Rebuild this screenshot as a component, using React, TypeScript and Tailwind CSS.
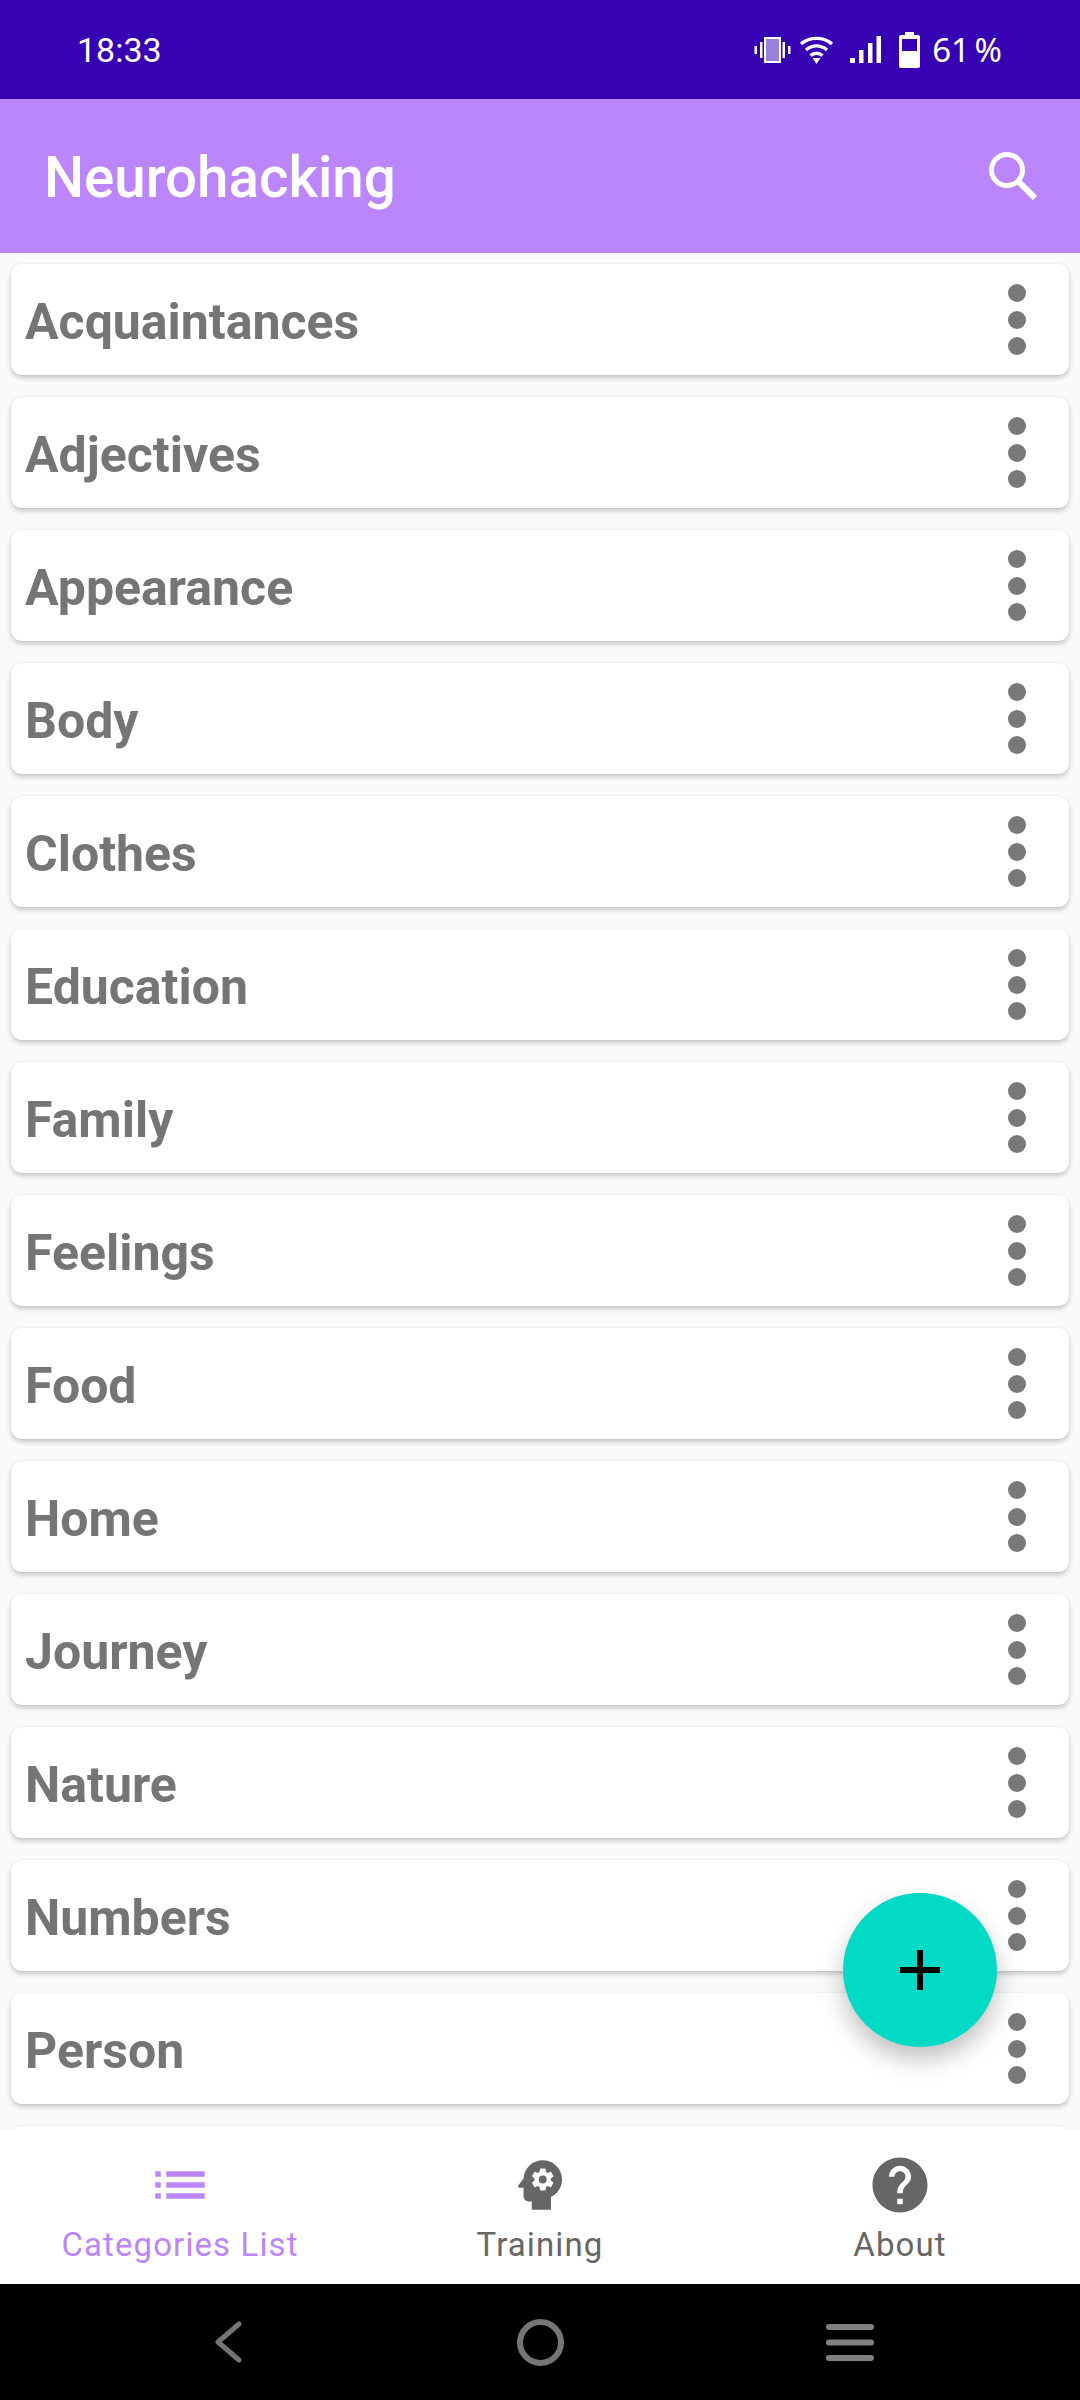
import type { ReactNode } from "react";
import { MdHelp, MdList, MdPsychology } from "react-icons/md";

const categories = [
  "Acquaintances", "Adjectives", "Appearance", "Body", "Clothes", "Education", "Family",
  "Feelings", "Food", "Home", "Journey", "Nature", "Numbers", "Person", "",
];

function Card({ name }: { name: string }) {
  return (
    <div className="flex h-[111px] shrink-0 items-center justify-between rounded-[11px] bg-white pl-[14px] pr-[43px] shadow-[0_3px_5px_rgba(0,0,0,0.2),0_0_2px_rgba(0,0,0,0.08)]">
      <span className="pt-[5px] text-[50px] font-bold leading-none text-[#757575]">{name}</span>
      <span className="flex flex-col gap-[8.6px]">
        <span className="size-[18px] rounded-full bg-[#787878]" />
        <span className="size-[18px] rounded-full bg-[#787878]" />
        <span className="size-[18px] rounded-full bg-[#787878]" />
      </span>
    </div>
  );
}

function StatusIcons() {
  return (
    <div className="flex items-center text-white">
      <svg width="37" height="26" viewBox="0 0 37 26" className="mr-[9px]">
        <rect x="11" y="1" width="15" height="24" fill="#9a7fdc" stroke="white" strokeWidth="2" />
        <rect x="6" y="5" width="2.5" height="16" fill="white" />
        <rect x="28.5" y="5" width="2.5" height="16" fill="white" />
        <rect x="0.5" y="9" width="2.5" height="8" fill="white" />
        <rect x="34" y="9" width="2.5" height="8" fill="white" />
      </svg>
      <svg width="33" height="28" viewBox="0 0 33 28" className="mr-[17px]" fill="none" stroke="white" strokeWidth="3.4">
        <path d="M1 8C9.5 .5 23.5 .5 32 8" />
        <path d="M6 14C12 8.5 21 8.5 27 14" />
        <path d="M10.5 19.5C14 16.5 19 16.5 22.5 19.5" />
        <path d="M12.5 22H20.5L16.5 28Z" fill="white" stroke="none" />
      </svg>
      <svg width="31" height="27" viewBox="0 0 31 27" className="mr-[18px]" fill="white">
        <rect x="0" y="22" width="5" height="5" />
        <rect x="9" y="14" width="4.5" height="13" />
        <rect x="18" y="7" width="4.5" height="20" />
        <rect x="26.5" y="0" width="4.5" height="27" />
      </svg>
      <svg width="21" height="36" viewBox="0 0 21 36" className="mr-[12px]">
        <path d="M6 0H15V3H19Q21 3 21 5V34Q21 36 19 36H2Q0 36 0 34V5Q0 3 2 3H6Z" fill="white" />
        <rect x="3" y="7" width="15" height="12" fill="#3700b3" />
      </svg>
      <span className="font-['Noto_Sans',sans-serif] text-[33px] leading-none [word-spacing:-4px]">61 %</span>
    </div>
  );
}

function NavItem({ label, active, children }: { label: string; active?: boolean; children: ReactNode }) {
  return (
    <div className={`flex flex-1 flex-col items-center ${active ? "text-[#bb86fc]" : "text-[#666666]"}`}>
      <div className="flex h-[66px] items-center justify-center">{children}</div>
      <span className="mt-[5px] text-[33px] leading-[44px] tracking-[1.1px]">{label}</span>
    </div>
  );
}

export default function App() {
  return (
    <div className="relative flex h-[2400px] w-[1080px] flex-col overflow-hidden bg-[#fafafa] font-['Roboto',sans-serif]">
      <header className="flex h-[99px] shrink-0 items-center justify-between bg-[#3700b3] pl-[77px] pr-[78px] text-white">
        <span className="text-[34px] leading-none">18:33</span>
        <StatusIcons />
      </header>
      <div className="z-10 flex h-[154px] shrink-0 items-center justify-between bg-[#bb86fc] pl-[44px] pr-[43px] text-white">
        <span className="pt-[5px] text-[56.5px] font-medium leading-none">Neurohacking</span>
        <svg width="48" height="48" viewBox="0 0 48 48" fill="none" stroke="white" strokeWidth="5">
          <circle cx="18" cy="18" r="15.5" />
          <path d="M28 28L46 46" strokeWidth="6" />
        </svg>
      </div>
      <main className="flex min-h-0 flex-1 flex-col gap-[22px] overflow-hidden px-[11px] pt-[11px]">
        {categories.map((c, i) => (
          <Card key={i} name={c} />
        ))}
      </main>
      <nav className="flex h-[154px] shrink-0 bg-white pt-[22px]">
        <NavItem label="Categories List" active>
          <MdList size={66} />
        </NavItem>
        <NavItem label="Training">
          <MdPsychology size={66} />
        </NavItem>
        <NavItem label="About">
          <MdHelp size={66} />
        </NavItem>
      </nav>
      <footer className="flex h-[116px] shrink-0 items-center bg-black pl-[214px]">
        <svg width="28" height="42" viewBox="0 0 28 42" fill="none" stroke="#757575" strokeWidth="5" strokeLinecap="round" strokeLinejoin="round">
          <path d="M25 3L4 21L25 39" />
        </svg>
        <svg width="47" height="47" viewBox="0 0 47 47" fill="none" stroke="#757575" strokeWidth="6" className="ml-[275px]">
          <circle cx="23.5" cy="23.5" r="20.5" />
        </svg>
        <svg width="48" height="37" viewBox="0 0 48 37" fill="#808080" className="ml-[262px]">
          <rect x="0" y="0" width="48" height="6" rx="3" />
          <rect x="0" y="15.5" width="48" height="6" rx="3" />
          <rect x="0" y="31" width="48" height="6" rx="3" />
        </svg>
      </footer>
      <button className="absolute left-[843px] top-[1893px] flex size-[154px] items-center justify-center rounded-full bg-[#03dac5] shadow-[0_12px_24px_rgba(0,0,0,0.25)]">
        <svg width="40" height="40" viewBox="0 0 40 40" fill="black">
          <rect x="0" y="17" width="40" height="6" />
          <rect x="17" y="0" width="6" height="40" />
        </svg>
      </button>
    </div>
  );
}
